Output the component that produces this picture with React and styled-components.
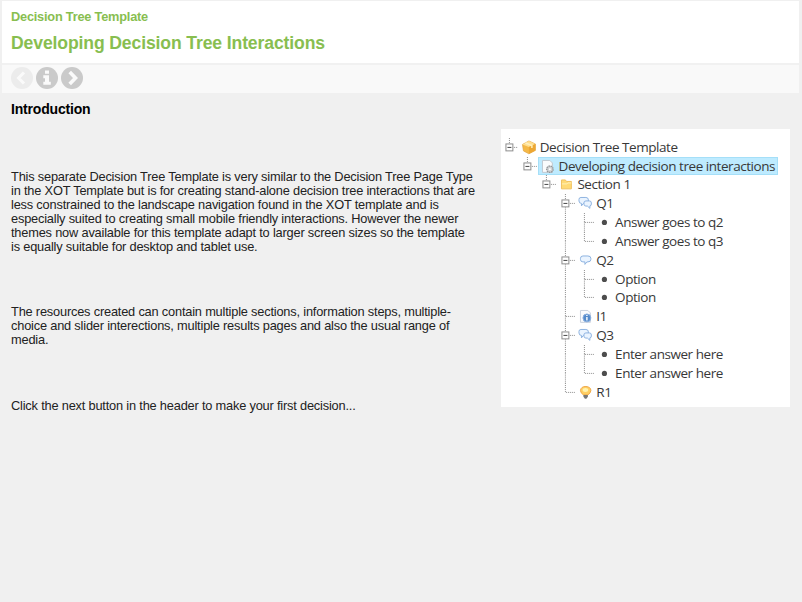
import React from "react";
import styled, { createGlobalStyle } from "styled-components";

const GlobalStyle = createGlobalStyle`
  * { box-sizing: border-box; }
  html, body { margin: 0; background: #f0f0f0; }
  body { font-family: "Liberation Sans", Arial, sans-serif; color: #222; }
`;

const Page = styled.div`
  width: 802px;
  height: 602px;
  padding: 1px 3px 0 2px;
  overflow: hidden;
  background: #f0f0f0;
`;

const Header = styled.header`
  height: 62px;
  padding: 8px 9px 0;
  background: #fff;
  color: #88be50;
`;

const Subtitle = styled.div`
  font-size: 12.8px;
  line-height: 16px;
  letter-spacing: -0.23px;
  font-weight: bold;
  white-space: nowrap;
`;

const Title = styled.h1`
  margin: 7px 0 0;
  font-size: 17.6px;
  line-height: 22px;
  letter-spacing: -0.13px;
  font-weight: bold;
  white-space: nowrap;
`;

const Toolbar = styled.nav`
  display: flex;
  gap: 2.8px;
  height: 30px;
  margin-bottom: 8px;
  padding: 2px 9px 0;
  border-top: 2px solid #f1f1f1;
  background: #f9f9f9;
`;

const RoundButton = styled.button`
  display: block;
  width: 22px;
  height: 22px;
  padding: 0;
  border: 0;
  border-radius: 50%;
  background: ${(p) => (p.$dim ? "#ececec" : "#cacaca")};
  svg { display: block; }
`;

const Content = styled.main`
  display: flex;
  justify-content: space-between;
  padding: 0 9px;
`;

const Article = styled.article`
  width: 480px;
`;

const SectionHeading = styled.h2`
  margin: 0 0 53px;
  font-size: 14px;
  line-height: 16px;
  letter-spacing: -0.18px;
  font-weight: bold;
  color: #000;
`;

const Paragraph = styled.p`
  margin: 0 0 52px;
  font-size: 12.8px;
  line-height: 14px;
  letter-spacing: -0.19px;
  white-space: nowrap;
  &:first-of-type { margin-bottom: 51px; }
`;

const Line = styled.span`
  display: block;
`;

const TreeCard = styled.aside`
  width: 289px;
  height: 278px;
  margin-top: 28px;
  padding-top: 8.8px;
  background: #fff;
  overflow: hidden;
`;

const TreeRow = styled.div`
  display: flex;
  height: 18.83px;
  margin-left: -1.4px;
`;

const Cell = styled.svg`
  display: block;
  flex: none;
  width: 18.83px;
  height: 18.83px;
`;

const Node = styled.div`
  display: flex;
  height: 18.83px;
  margin-left: 1px;
  padding-right: 2.5px;
  background: ${(p) => (p.$selected ? "#beebff" : "transparent")};
  box-shadow: ${(p) => (p.$selected ? "inset 0 0 0 1px #a5dff8" : "none")};
`;

const Label = styled.span`
  padding-left: 1.5px;
  font-family: "Open Sans", "Noto Sans", sans-serif;
  font-size: 13.5px;
  line-height: 18.83px;
  letter-spacing: -0.45px;
  color: #383838;
  white-space: nowrap;
`;

function Connector({ up, down, across, box }) {
  return (
    <Cell viewBox="0 0 19 19" fill="none" stroke="#8c8c8c" strokeDasharray="1 1">
      {up && <path d="M9.5 0V9.5" />}
      {down && <path d="M9.5 9.5V19" />}
      {across && <path d="M10 9.5H19" />}
      {box && (
        <g strokeDasharray="none">
          <rect x="6" y="6" width="7" height="7" fill="#fff" stroke="#8c8c8c" />
          <path d="M7.5 9.5H11.5" stroke="#444" />
        </g>
      )}
    </Cell>
  );
}

const bubble = { fill: "#eaf4ff", stroke: "#8db2e0" };

const glyphs = {
  package: (
    <>
      <path d="M3.5 6.5L10 3L16.5 6V12.5L10 16L4.5 13Z" fill="#f5b947" stroke="#dfa345" strokeWidth=".7" />
      <path d="M3.5 6.5L10 3L16.5 6L10 9Z" fill="#ffdf91" />
      <path d="M10 9L16.5 6V12.5L10 16Z" fill="#eda733" />
      <path d="M6.5 5L13 7.5V10" stroke="#fff0bd" strokeWidth="1.5" fill="none" />
    </>
  ),
  page: (
    <>
      <path d="M4.5 3.5H12L14.5 6V15.5H4.5Z" fill="#fafbfc" stroke="#c1c8cf" />
      <circle cx="12" cy="12.3" r="3.2" fill="#d2d4d6" stroke="#929699" strokeDasharray="1.5 .7" strokeWidth="1.4" />
      <circle cx="12" cy="12.3" r="1" fill="#fff" />
    </>
  ),
  folder: (
    <>
      <path d="M4.5 5H8.5L9.5 6.5H14.5V14H4.5Z" fill="#ffda75" stroke="#f0c05e" />
      <path d="M5 9H10L11 8H14.5" stroke="#fff1b8" fill="none" />
    </>
  ),
  chats: (
    <>
      <path d="M5 3.5H10Q12.5 3.5 12.5 6V7Q12.5 9.5 10 9.5H7.5L5.5 12V9.5Q3 9.5 3 7V5.5Q3 3.5 5 3.5Z" {...bubble} />
      <path d="M10 7H13.5Q15.5 7 15.5 9V10Q15.5 12 14 12V14.5L11.5 12.2H10Q8 12.2 8 10.2V9Q8 7 10 7Z" {...bubble} />
    </>
  ),
  chat: (
    <path d="M7 5H12Q15 5 15 7.5V8.5Q15 11 12 11H11L9 13.5V11H7Q4.5 11 4.5 8.5V7.5Q4.5 5 7 5Z" {...bubble} />
  ),
  info: (
    <>
      <path d="M4.5 3.5H12L14.5 6V15.5H4.5Z" fill="#fafbfd" stroke="#c9d1df" />
      <circle cx="11" cy="11" r="4" fill="#548acb" stroke="#8db0df" />
      <path d="M11 8V9M11 10V13.5" stroke="#fff" strokeWidth="1.4" />
    </>
  ),
  bulb: (
    <>
      <path d="M7.5 12Q4.5 10 4.5 7.5Q5 3.5 10 3.5Q15 4 15 7.5Q15 10 12 12Z" fill="#ffcf62" stroke="#efa84a" />
      <ellipse cx="9.5" cy="7" rx="2.8" ry="2" fill="#fff3b0" />
      <path d="M7.5 12H12V14L10.5 16H9L7.5 14Z" fill="#777" />
    </>
  ),
  dot: <circle cx="9.5" cy="9.5" r="2.6" fill="#4d4d4d" />,
};

const rows = [
  { depth: 0, icon: "package", text: "Decision Tree Template", box: true },
  { depth: 1, icon: "page", text: "Developing decision tree interactions", box: true, selected: true },
  { depth: 2, icon: "folder", text: "Section 1", box: true },
  { depth: 3, icon: "chats", text: "Q1", box: true, down: true },
  { depth: 4, icon: "dot", text: "Answer goes to q2", down: true, rail: true },
  { depth: 4, icon: "dot", text: "Answer goes to q3", rail: true },
  { depth: 3, icon: "chat", text: "Q2", box: true, down: true },
  { depth: 4, icon: "dot", text: "Option", down: true, rail: true },
  { depth: 4, icon: "dot", text: "Option", rail: true },
  { depth: 3, icon: "info", text: "I1", down: true },
  { depth: 3, icon: "chats", text: "Q3", box: true, down: true },
  { depth: 4, icon: "dot", text: "Enter answer here", down: true, rail: true },
  { depth: 4, icon: "dot", text: "Enter answer here", rail: true },
  { depth: 3, icon: "bulb", text: "R1" },
];

function TreeItem({ row }) {
  return (
    <TreeRow>
      {Array.from({ length: row.depth }, (_, i) => (
        <Connector key={i} up={row.rail && i === 3} down={row.rail && i === 3} />
      ))}
      <Connector up across down={row.down} box={row.box} />
      <Node $selected={row.selected}>
        <Cell viewBox="0 0 19 19">{glyphs[row.icon]}</Cell>
        <Label>{row.text}</Label>
      </Node>
    </TreeRow>
  );
}

const paragraphs = [
  [
    "This separate Decision Tree Template is very similar to the Decision Tree Page Type",
    "in the XOT Template but is for creating stand-alone decision tree interactions that are",
    "less constrained to the landscape navigation found in the XOT template and is",
    "especially suited to creating small mobile friendly interactions. However the newer",
    "themes now available for this template adapt to larger screen sizes so the template",
    "is equally suitable for desktop and tablet use.",
  ],
  [
    "The resources created can contain multiple sections, information steps, multiple-",
    "choice and slider interections, multiple results pages and also the usual range of",
    "media.",
  ],
  ["Click the next button in the header to make your first decision..."],
];

export default function App() {
  return (
    <>
      <GlobalStyle />
      <Page>
        <Header>
          <Subtitle>Decision Tree Template</Subtitle>
          <Title>Developing Decision Tree Interactions</Title>
        </Header>
        <Toolbar>
          <RoundButton $dim aria-label="Previous">
            <svg width="22" height="22" fill="none" stroke="#fafafa" strokeWidth="3">
              <path d="M13 5.5L7.5 11L13 16.5" />
            </svg>
          </RoundButton>
          <RoundButton aria-label="Information">
            <svg width="22" height="22" fill="#fafafa">
              <path d="M9 3.5H13V6.8H9ZM7.3 8.3H13V14.8H14.8V17.8H7.3V14.8H9V11.2H7.3Z" />
            </svg>
          </RoundButton>
          <RoundButton aria-label="Next">
            <svg width="22" height="22" fill="none" stroke="#fafafa" strokeWidth="3.6">
              <path d="M8.7 5L14.5 11L8.7 17" />
            </svg>
          </RoundButton>
        </Toolbar>
        <Content>
          <Article>
            <SectionHeading>Introduction</SectionHeading>
            {paragraphs.map((lines, i) => (
              <Paragraph key={i}>
                {lines.map((text) => (
                  <Line key={text}>{text}</Line>
                ))}
              </Paragraph>
            ))}
          </Article>
          <TreeCard>
            {rows.map((row, i) => (
              <TreeItem key={i} row={row} />
            ))}
          </TreeCard>
        </Content>
      </Page>
    </>
  );
}
